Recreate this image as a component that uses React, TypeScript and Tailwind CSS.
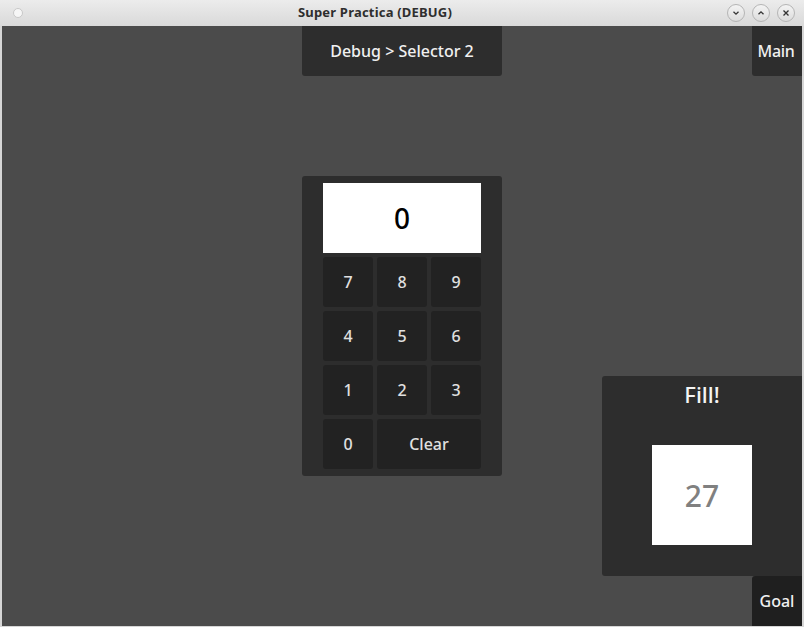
import React from "react";

const font = { fontFamily: '"Noto Sans", "Open Sans", sans-serif' };

function WinBtn({ children }: { children: React.ReactNode }) {
  return (
    <div className="w-[18px] h-[18px] rounded-full border border-[#b5b5b5] bg-gradient-to-b from-[#f4f4f4] to-[#dcdcdc] flex items-center justify-center">
      {children}
    </div>
  );
}

function Key({ label, wide = false }: { label: string; wide?: boolean }) {
  return (
    <div
      className={`${wide ? "col-span-2" : ""} h-[50px] rounded-[3px] bg-[#222222] flex items-center justify-center text-[16px] font-medium text-[#e0e0e0]`}
    >
      {label}
    </div>
  );
}

export default function App() {
  return (
    <div className="w-[804px] h-[627px] flex flex-col bg-[#d6d6d6] overflow-hidden" style={font}>
      {/* title bar */}
      <div className="h-[26px] flex items-center relative bg-gradient-to-b from-[#ececec] to-[#d9d9d9] px-[13px]">
        <div className="w-[10px] h-[10px] rounded-full bg-[#f6f6f6] border border-[#c8c8c8]" />
        <div className="flex-1 text-center text-[13px] font-bold text-[#2e2e2e] tracking-[0.2px]">
          Super Practica (DEBUG)
        </div>
        <div className="flex items-center gap-[7px] mr-[-4px]">
          <WinBtn>
            <svg width="8" height="8" viewBox="0 0 8 8"><path d="M1.5 2.8 L4 5.2 L6.5 2.8" fill="none" stroke="#333" strokeWidth="1.3" /></svg>
          </WinBtn>
          <WinBtn>
            <svg width="8" height="8" viewBox="0 0 8 8"><path d="M1.5 5.2 L4 2.8 L6.5 5.2" fill="none" stroke="#333" strokeWidth="1.3" /></svg>
          </WinBtn>
          <WinBtn>
            <svg width="8" height="8" viewBox="0 0 8 8"><path d="M1.5 1.5 L6.5 6.5 M6.5 1.5 L1.5 6.5" fill="none" stroke="#333" strokeWidth="1.3" /></svg>
          </WinBtn>
        </div>
      </div>
      {/* content */}
      <div className="flex-1 flex px-[2px] pb-[1px]">
        <div className="w-[800px] h-[600px] bg-[#4b4b4b] grid grid-cols-[repeat(16,50px)] grid-rows-[repeat(12,50px)]">
          <div className="col-start-7 col-span-4 row-start-1 bg-[#2d2d2d] rounded-b-[3px] flex items-center justify-center text-[16px] font-medium text-[#f0f0f0]">
            Debug &gt; Selector 2
          </div>
          <div className="col-start-16 row-start-1 bg-[#2d2d2d] rounded-bl-[3px] flex items-center justify-center pr-[2px] text-[16px] font-medium text-[#f0f0f0] tracking-[-0.3px]">
            Main
          </div>
          <div className="col-start-7 col-span-4 row-start-4 row-span-6 bg-[#2d2d2d] rounded-[3px] px-[21px] pt-[7px] flex flex-col gap-[4px]">
            <div className="h-[70px] bg-white flex items-center justify-center text-[28px] font-medium text-black">0</div>
            <div className="grid grid-cols-3 gap-[4px]">
              {["7", "8", "9", "4", "5", "6", "1", "2", "3"].map((k) => (
                <Key key={k} label={k} />
              ))}
              <Key label="0" />
              <Key label="Clear" wide />
            </div>
          </div>
          <div className="col-start-13 col-span-4 row-start-8 row-span-4 bg-[#2d2d2d] rounded-l-[3px] flex flex-col items-center">
            <div className="h-[36px] flex items-center text-[22px] font-medium text-[#f4f4f4]">Fill!</div>
            <div className="mt-[33px] w-[100px] h-[100px] bg-white flex items-center justify-center text-[30px] font-medium text-[#808080]">
              27
            </div>
          </div>
          <div className="col-start-16 row-start-12 bg-[#1f1f1f] rounded-tl-[3px] flex items-center justify-center text-[16px] font-medium text-[#f0f0f0]">
            Goal
          </div>
        </div>
      </div>
    </div>
  );
}
